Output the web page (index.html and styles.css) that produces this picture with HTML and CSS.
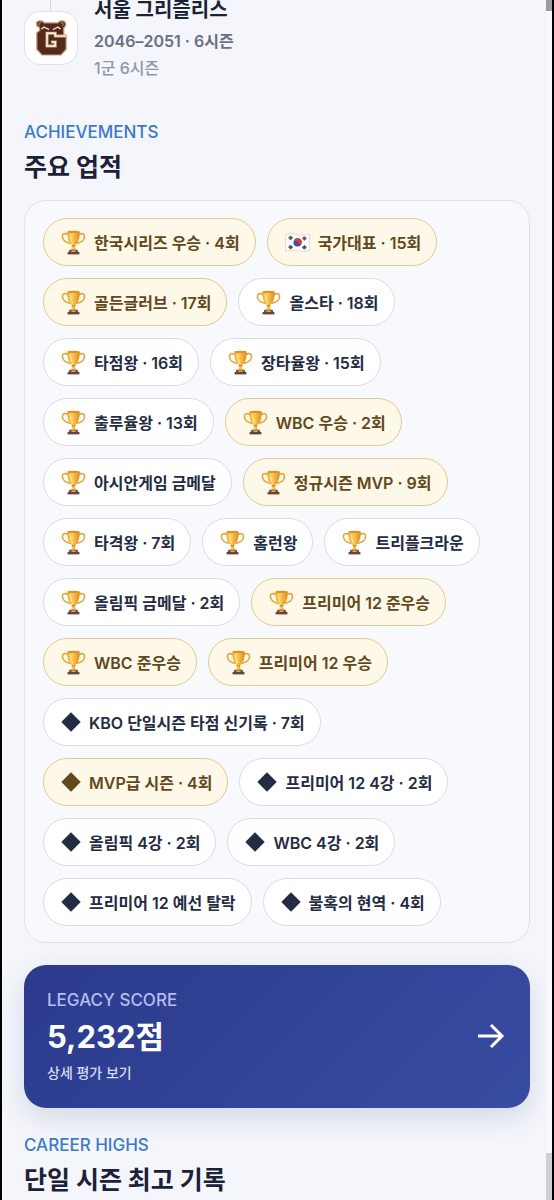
FILE: index.html
```html
<!DOCTYPE html>
<html lang="ko">
<head>
  <meta charset="UTF-8" />
  <meta name="viewport" content="width=device-width, initial-scale=1.0" />
  <title>서울 그리즐리스</title>
  <link rel="stylesheet" href="styles.css">
</head>
<body>

<!-- Shared icons -->
<svg class="sprite" aria-hidden="true">
  <linearGradient id="gold" x1="0" x2="1" y1="0" y2="0">
    <stop offset="0" stop-color="#f0ae35" />
    <stop offset="0.4" stop-color="#fdc956" />
    <stop offset="1" stop-color="#dc8e20" />
  </linearGradient>
  <symbol id="trophy" viewBox="0 0 25 25">
    <path d="M7 4.500C4 2.800 1.300 3.600 1.400 6.400C1.500 10 4.700 12.700 8.600 13.200M18 4.500C21 2.800 23.700 3.600 23.600 6.400C23.500 10 20.300 12.700 16.400 13.200" fill="none" stroke="#e5a53a" stroke-width="1.600" stroke-linecap="round" />
    <path d="M6.300 1.800H18.700C18.800 8 17.500 13.300 14 15.300V17.500L15.200 20.500H9.800L11 17.500V15.300C7.500 13.300 6.200 8 6.300 1.800Z" fill="url(#gold)" />
    <ellipse cx="12.500" cy="1.900" rx="6.200" ry="1.100" fill="#d99429" />
    <path d="M9.300 4.500C9.400 8 10 10.700 11.400 12.700" fill="none" stroke="#ffe9a3" stroke-width="1.200" stroke-linecap="round" />
    <path d="M10.600 15.800H14.400" stroke="#b97522" stroke-width="1" />
    <path d="M8.300 19.800H16.700L17.300 22.300H7.700Z" fill="#7b5148" />
    <path d="M10.500 20.500H14.500V21.900H10.500Z" fill="#e8b45a" />
    <path d="M6.600 22H18.400V24.400H6.600Z" fill="#65433f" />
  </symbol>
  <symbol id="flag" viewBox="0 0 25 25">
    <path d="M.5 4.500C5 2.800 8.500 3.500 12.500 4.500C16.500 5.500 20 5 24.500 4V20.500C20 22 16.500 21.800 12.500 20.800C8.500 19.800 5 20 .5 21.500Z" fill="#fbfbfc" stroke="#d5d3d0" stroke-width=".7" />
    <circle cx="12.500" cy="12.600" r="4" fill="#2d54a2" />
    <path d="M9.100 10.400A4 4 0 0 1 16.300 13.900C15.400 15 13.500 14.600 12.500 12.600C11.700 11.100 9.800 10.600 9.100 10.400Z" fill="#d93a42" />
    <g stroke="#35363a" stroke-width="3.400" stroke-dasharray=".95 .25">
      <path d="M4.300 8.900L6.900 6.700" />
      <path d="M18.100 7.300L20.700 9.300" />
      <path d="M4.300 16L6.900 18.300" />
      <path d="M18.100 18.500L20.700 16.200" />
    </g>
  </symbol>
  <symbol id="diamond" viewBox="0 0 20 20">
    <path d="M10 .3L19.700 10L10 19.700L.3 10Z" fill="currentColor" />
  </symbol>
</svg>

<main class="page">
  <section class="team">
    <div class="team--rail">
      <div class="team--logo">
        <svg viewBox="0 0 36 40" role="img" aria-label="그리즐리스">
          <path d="M6 9C1.500 7.500 1.500 2 6 1.800C8.500 1.600 10 2.600 10.800 4H25.200C26 2.600 27.500 1.600 30 1.800C34.500 2 34.500 7.500 31.500 9V17H34V32L28.500 38H8.500L3 32V14.500L6 12Z" fill="#54291b" stroke="#c09b74" stroke-width="1.300" stroke-linejoin="round" />
          <path d="M5.800 6.800C4.200 5.200 5.500 3.600 7.500 4M30.200 6.800C31.800 5.200 30.500 3.600 28.500 4" fill="none" stroke="#d6b48b" stroke-width="1" />
          <path d="M8 10.800L10.500 8.300L16 11.200M28 10.800L25.500 8.300L20 11.200" fill="none" stroke="#f2dfc7" stroke-width="1.400" />
          <path d="M34 18H22.500V15H13.800V28.500H22.500V24.300H18.300" fill="none" stroke="#c9a57c" stroke-width="3.200" />
          <path d="M34 18H22.500V15H13.800V28.500H22.500V24.300H18.300" fill="none" stroke="#fbf4ea" stroke-width="1.500" />
        </svg>
      </div>
    </div>
    <div class="team--info">
      <h3 class="team--name">서울 그리즐리스</h3>
      <p class="team--years">2046–2051 · 6시즌</p>
      <p class="team--level">1군 6시즌</p>
    </div>
  </section>

  <section>
    <p class="eyebrow">ACHIEVEMENTS</p>
    <h2 class="title">주요 업적</h2>
    <ul class="achievements">
      <li class="chip chip--gold"><svg class="chip--icon"><use href="#trophy" /></svg>한국시리즈 우승 · 4회</li>
      <li class="chip chip--gold"><svg class="chip--icon"><use href="#flag" /></svg>국가대표 · 15회</li>
      <li class="chip chip--gold"><svg class="chip--icon"><use href="#trophy" /></svg>골든글러브 · 17회</li>
      <li class="chip"><svg class="chip--icon"><use href="#trophy" /></svg>올스타 · 18회</li>
      <li class="chip"><svg class="chip--icon"><use href="#trophy" /></svg>타점왕 · 16회</li>
      <li class="chip"><svg class="chip--icon"><use href="#trophy" /></svg>장타율왕 · 15회</li>
      <li class="chip"><svg class="chip--icon"><use href="#trophy" /></svg>출루율왕 · 13회</li>
      <li class="chip chip--gold"><svg class="chip--icon"><use href="#trophy" /></svg>WBC 우승 · 2회</li>
      <li class="chip"><svg class="chip--icon"><use href="#trophy" /></svg>아시안게임 금메달</li>
      <li class="chip chip--gold"><svg class="chip--icon"><use href="#trophy" /></svg>정규시즌 MVP · 9회</li>
      <li class="chip"><svg class="chip--icon"><use href="#trophy" /></svg>타격왕 · 7회</li>
      <li class="chip"><svg class="chip--icon"><use href="#trophy" /></svg>홈런왕</li>
      <li class="chip"><svg class="chip--icon"><use href="#trophy" /></svg>트리플크라운</li>
      <li class="chip"><svg class="chip--icon"><use href="#trophy" /></svg>올림픽 금메달 · 2회</li>
      <li class="chip chip--gold"><svg class="chip--icon"><use href="#trophy" /></svg>프리미어 12 준우승</li>
      <li class="chip chip--gold"><svg class="chip--icon"><use href="#trophy" /></svg>WBC 준우승</li>
      <li class="chip chip--gold"><svg class="chip--icon"><use href="#trophy" /></svg>프리미어 12 우승</li>
      <li class="chip"><svg class="chip--icon chip--diamond"><use href="#diamond" /></svg>KBO 단일시즌 타점 신기록 · 7회</li>
      <li class="chip chip--gold"><svg class="chip--icon chip--diamond"><use href="#diamond" /></svg>MVP급 시즌 · 4회</li>
      <li class="chip"><svg class="chip--icon chip--diamond"><use href="#diamond" /></svg>프리미어 12 4강 · 2회</li>
      <li class="chip"><svg class="chip--icon chip--diamond"><use href="#diamond" /></svg>올림픽 4강 · 2회</li>
      <li class="chip"><svg class="chip--icon chip--diamond"><use href="#diamond" /></svg>WBC 4강 · 2회</li>
      <li class="chip"><svg class="chip--icon chip--diamond"><use href="#diamond" /></svg>프리미어 12 예선 탈락</li>
      <li class="chip"><svg class="chip--icon chip--diamond"><use href="#diamond" /></svg>불혹의 현역 · 4회</li>
    </ul>
  </section>

  <a class="legacy" href="#legacy">
    <span class="legacy--text">
      <span class="legacy--label">LEGACY SCORE</span>
      <strong class="legacy--score">5,232점</strong>
      <span class="legacy--more">상세 평가 보기</span>
    </span>
    <svg class="legacy--arrow" viewBox="0 0 28 28" aria-hidden="true">
      <path d="M1 14H25M14 3L25 14L14 25" />
    </svg>
  </a>

  <section>
    <p class="eyebrow">CAREER HIGHS</p>
    <h2 class="title">단일 시즌 최고 기록</h2>
  </section>
</main>

<div class="scroll" aria-hidden="true">
  <div class="scroll--thumb"></div>
  <div class="scroll--end"></div>
</div>

</body>
</html>
```
FILE: styles.css
```css
* {
  box-sizing: border-box;
}

body {
  position: relative;
  min-height: 100vh;
  margin: 0;
  border: solid #000;
  border-width: 0 2px;
  background-color: #f4f6fb;
  color: #1b2238;
  font-family: Inter, "Noto Sans CJK KR", sans-serif;
}

h2, h3, p, ul {
  margin: 0;
  padding: 0;
}

.sprite {
  position: absolute;
  width: 0;
  height: 0;
}

.page {
  padding: 0 22px;
}

.team {
  display: flex;
  gap: 16px;
  margin-bottom: 38px;
}

/* line that joins the team to the one before it */
.team--rail {
  padding-top: 11px;
  background: linear-gradient(#d3d7e4, #d3d7e4) 26px 0 / 1px 11px no-repeat;
}

.team--logo {
  display: flex;
  align-items: center;
  justify-content: center;
  width: 54px;
  height: 54px;
  border: 1px solid #dfe1ec;
  border-radius: 16px;
  background-color: #fff;
}

.team--logo svg {
  width: 34px;
  height: 38px;
}

.team--name {
  margin-bottom: 8px;
  font-size: 20px;
  line-height: 20px;
}

.team--years {
  color: #687083;
  font-size: 16px;
  font-weight: 600;
  line-height: 26px;
}

.team--level {
  color: #8f96a5;
  font-size: 16px;
  font-weight: 500;
  line-height: 28px;
}

.eyebrow {
  color: #3b7ac8;
  font-size: 17px;
  font-weight: 500;
  line-height: 24px;
}

.title {
  padding-top: 4px;
  font-size: 25px;
  line-height: 38px;
}

.achievements {
  display: flex;
  flex-wrap: wrap;
  gap: 12px 11px;
  margin: 14px 0 22px;
  padding: 17px 18px 16px;
  border: 1px solid #e0e2ea;
  border-radius: 22px;
  background-color: #f8f9fd;
  list-style: none;
}

.chip {
  display: flex;
  align-items: center;
  gap: 8px;
  height: 48px;
  padding: 0 15px 0 17px;
  border: 1px solid #d9dce9;
  border-radius: 24px;
  background-color: #fff;
  color: #242c42;
  font-size: 16px;
  font-weight: 600;
  white-space: nowrap;
}

.chip--gold {
  border-color: #dfcb91;
  background-color: #fef8e8;
  color: #62491c;
}

.chip--icon {
  width: 25px;
  height: 25px;
}

.chip--diamond {
  width: 20px;
  height: 20px;
}

.legacy {
  display: flex;
  align-items: center;
  justify-content: space-between;
  margin-bottom: 25px;
  padding: 23px 25px 24px 23px;
  border-radius: 22px;
  background: linear-gradient(135deg, #2b3a8c, #384ca2);
  box-shadow: 0 10px 28px rgba(40, 60, 120, 0.16);
  color: #fff;
  text-decoration: none;
}

.legacy--text {
  display: flex;
  flex-direction: column;
}

.legacy--label {
  color: #b3bdf2;
  font-size: 17px;
  font-weight: 500;
  line-height: 24px;
}

.legacy--score {
  font-size: 31px;
  line-height: 50px;
}

.legacy--more {
  color: #d5daf5;
  font-size: 14px;
  font-weight: 500;
  line-height: 22px;
}

.legacy--arrow {
  width: 28px;
  height: 28px;
  fill: none;
  stroke: currentColor;
  stroke-width: 3;
}

/* scrollbar drawn over the right edge */
.scroll {
  position: absolute;
  top: 0;
  right: 0;
  bottom: 0;
  display: flex;
  flex-direction: column;
  justify-content: space-between;
  width: 6px;
  background-color: #f8f9fd;
}

.scroll--thumb {
  height: 11px;
  background-color: #9b9ca2;
}

.scroll--end {
  height: 47px;
  background-color: #d0d1d6;
}
```
